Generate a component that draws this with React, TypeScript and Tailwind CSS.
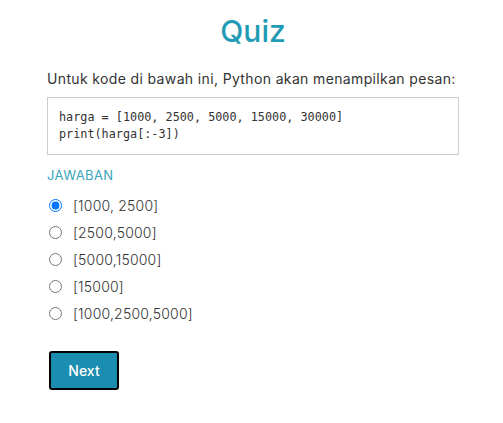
import React, { useState } from 'react';

const OPTIONS = ['[1000, 2500]', '[2500,5000]', '[5000,15000]', '[15000]', '[1000,2500,5000]'];

export default function App() {
  const [picked, setPicked] = useState(0);

  return (
    <div className="min-h-screen bg-white font-['Inter',sans-serif] text-[#333]">
      <div className="ml-[47px] w-[412px] pt-[12px]">
        <h1 className="text-center text-[30px] font-medium leading-[38px] text-[#1f9bb5]">Quiz</h1>

        <p className="mt-[19px] whitespace-nowrap text-[14px] leading-[20px] tracking-[0.36px] text-[#333]">
          Untuk kode di bawah ini, Python akan menampilkan pesan:
        </p>

        <pre className="mt-[8px] h-[58px] border border-[#cccccc] bg-white px-[11px] pt-[11px] font-['DejaVu_Sans_Mono',monospace] text-[11.8px] leading-[17px] text-[#333]">
{`harga = [1000, 2500, 5000, 15000, 30000]
print(harga[:-3])`}
        </pre>

        <div className="mt-[11px] text-[13px] leading-[18px] tracking-[0.4px] text-[#3ba3bb]">JAWABAN</div>

        {/* answer options */}
        <div className="mt-[11px] flex flex-col gap-[7px]">
          {OPTIONS.map((opt, i) => (
            <label key={opt} className="flex h-[20px] items-center gap-[11px] pl-[2px] text-[14px] font-light tracking-[0.2px] text-[#333]">
              <input
                type="radio"
                name="jawaban"
                checked={picked === i}
                onChange={() => setPicked(i)}
                className="m-0 h-[13px] w-[13px]"
              />
              {opt}
            </label>
          ))}
        </div>

        <button className="mt-[28px] ml-[2px] h-[39px] w-[70px] rounded-[3px] border-2 border-black bg-[#1a8db0] text-[14px] font-medium text-white">
          Next
        </button>
      </div>
    </div>
  );
}
